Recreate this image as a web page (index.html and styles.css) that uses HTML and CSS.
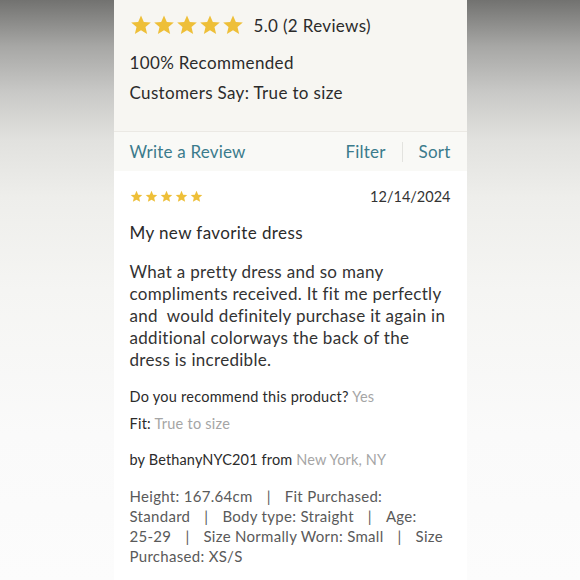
FILE: index.html
```html
<!DOCTYPE html>
<html>
<head>
<meta charset="utf-8">
<link rel="stylesheet" href="styles.css">
</head>
<body>
<div class="panel">
  <section class="summary">
    <div class="rating-row">
      <span class="stars big">
        <svg viewBox="0 0 24 24"><path d="M12 1.5l3.1 7.2 7.6.6-5.8 5 1.8 7.5L12 17.8l-6.7 4 1.8-7.5-5.8-5 7.6-.6z"/></svg>
        <svg viewBox="0 0 24 24"><path d="M12 1.5l3.1 7.2 7.6.6-5.8 5 1.8 7.5L12 17.8l-6.7 4 1.8-7.5-5.8-5 7.6-.6z"/></svg>
        <svg viewBox="0 0 24 24"><path d="M12 1.5l3.1 7.2 7.6.6-5.8 5 1.8 7.5L12 17.8l-6.7 4 1.8-7.5-5.8-5 7.6-.6z"/></svg>
        <svg viewBox="0 0 24 24"><path d="M12 1.5l3.1 7.2 7.6.6-5.8 5 1.8 7.5L12 17.8l-6.7 4 1.8-7.5-5.8-5 7.6-.6z"/></svg>
        <svg viewBox="0 0 24 24"><path d="M12 1.5l3.1 7.2 7.6.6-5.8 5 1.8 7.5L12 17.8l-6.7 4 1.8-7.5-5.8-5 7.6-.6z"/></svg>
      </span>
      <span class="score">5.0 (2 Reviews)</span>
    </div>
    <div class="summary-line first">100% Recommended</div>
    <div class="summary-line">Customers Say: True to size</div>
  </section>
  <nav class="toolbar">
    <span class="link">Write a Review</span>
    <span class="tools">
      <span class="link">Filter</span>
      <span class="divider"></span>
      <span class="link">Sort</span>
    </span>
  </nav>
  <article class="review">
    <div class="review-head">
      <span class="stars small">
        <svg viewBox="0 0 24 24"><path d="M12 1.5l3.1 7.2 7.6.6-5.8 5 1.8 7.5L12 17.8l-6.7 4 1.8-7.5-5.8-5 7.6-.6z"/></svg>
        <svg viewBox="0 0 24 24"><path d="M12 1.5l3.1 7.2 7.6.6-5.8 5 1.8 7.5L12 17.8l-6.7 4 1.8-7.5-5.8-5 7.6-.6z"/></svg>
        <svg viewBox="0 0 24 24"><path d="M12 1.5l3.1 7.2 7.6.6-5.8 5 1.8 7.5L12 17.8l-6.7 4 1.8-7.5-5.8-5 7.6-.6z"/></svg>
        <svg viewBox="0 0 24 24"><path d="M12 1.5l3.1 7.2 7.6.6-5.8 5 1.8 7.5L12 17.8l-6.7 4 1.8-7.5-5.8-5 7.6-.6z"/></svg>
        <svg viewBox="0 0 24 24"><path d="M12 1.5l3.1 7.2 7.6.6-5.8 5 1.8 7.5L12 17.8l-6.7 4 1.8-7.5-5.8-5 7.6-.6z"/></svg>
      </span>
      <span class="date">12/14/2024</span>
    </div>
    <h3 class="title">My new favorite dress</h3>
    <p class="body">What a pretty dress and so many compliments received. It fit me perfectly and&nbsp; would definitely purchase it again in additional colorways the back of the dress is incredible.</p>
    <div class="meta first">Do you recommend this product? <span class="muted">Yes</span></div>
    <div class="meta">Fit: <span class="muted">True to size</span></div>
    <div class="author">by BethanyNYC201 from <span class="muted">New York, NY</span></div>
    <div class="details">Height: 167.64cm<span class="sep">|</span>Fit Purchased:<br>Standard<span class="sep">|</span>Body type: Straight<span class="sep">|</span>Age:<br>25-29<span class="sep">|</span>Size Normally Worn: Small<span class="sep">|</span>Size<br>Purchased: XS/S</div>
  </article>
</div>
</body>
</html>
```

FILE: styles.css
```css
html, body {
  margin: 0;
  padding: 0;
  height: 100%;
}
body {
  background: linear-gradient(to bottom, #727270 0%, #a7a7a5 8%, #c9c9c7 16%, #e1e1de 24%, #eeeeeb 34%, #f5f5f3 50%, #fafafa 75%, #fcfcfc 100%);
  display: flex;
  justify-content: center;
  font-family: "Lato", "Open Sans", sans-serif;
  color: #2b2b2b;
  overflow: hidden;
}
.panel {
  width: 353px;
  background: #ffffff;
  min-height: 100%;
}
.summary {
  background: #f7f6f2;
  padding: 12px 16px 23px;
  border-bottom: 1px solid #ebe9e4;
}
.rating-row {
  display: flex;
  align-items: center;
  height: 26px;
}
.stars {
  display: flex;
}
.stars svg {
  fill: #eebf38;
  display: block;
}
.stars.big svg {
  width: 22px;
  height: 22px;
  margin-right: 1.2px;
}
.stars.small svg {
  width: 13px;
  height: 13px;
  margin-right: 2px;
}
.score {
  margin-left: 8px;
  font-size: 17px;
  letter-spacing: 0.35px;
}
.summary-line {
  font-size: 17px;
  letter-spacing: 0.35px;
  line-height: 30px;
}
.summary-line.first {
  margin-top: 10px;
}
.toolbar {
  background: #f9f9f6;
  height: 39px;
  padding: 0 16px;
  display: flex;
  align-items: center;
  justify-content: space-between;
}
.link {
  color: #3b7b8c;
  font-size: 17px;
  letter-spacing: 0.2px;
}
.tools {
  display: flex;
  align-items: center;
}
.divider {
  width: 1px;
  height: 20px;
  background: #e3e3df;
  margin: 0 16px;
}
.review {
  padding: 15px 16px 0;
}
.review-head {
  display: flex;
  align-items: center;
  justify-content: space-between;
  height: 20px;
}
.date {
  font-size: 14.5px;
  color: #333;
}
.title {
  margin: 16px 0 0;
  font-size: 17px;
  letter-spacing: 0.4px;
  font-weight: normal;
  line-height: 22px;
}
.body {
  margin: 17px 0 0;
  font-size: 17px;
  letter-spacing: 0.3px;
  line-height: 22px;
  color: #333;
}
.meta {
  font-size: 14.5px;
  letter-spacing: 0.25px;
  line-height: 20px;
  margin-top: 7px;
}
.meta.first {
  margin-top: 16px;
}
.muted {
  color: #a5a5a5;
}
.author {
  font-size: 14.5px;
  letter-spacing: 0.15px;
  line-height: 20px;
  margin-top: 16px;
}
.details {
  font-size: 15px;
  letter-spacing: 0.3px;
  line-height: 20px;
  margin-top: 16px;
  color: #5a5a5a;
}
.sep {
  margin: 0 14px;
}
```
